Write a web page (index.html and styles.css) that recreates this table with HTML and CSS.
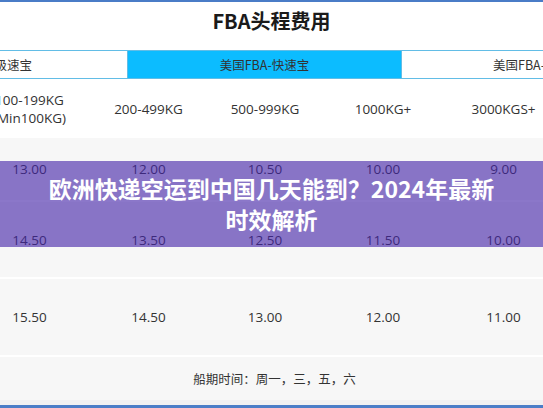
FILE: index.html
```html
<!DOCTYPE html>
<html lang="zh-CN">
<head>
<meta charset="utf-8">
<title>FBA头程费用</title>
<link rel="stylesheet" href="styles.css">
</head>
<body>
<div class="page">
  <div class="topline"></div>
  <h1 class="title">FBA头程费用</h1>
  <div class="tabs">
    <div class="tab tab-left">美国FBA-超级速宝</div>
    <div class="tab tab-active">美国FBA-快速宝</div>
    <div class="tab tab-right">美国FBA-特快宝</div>
  </div>
  <div class="table">
    <div class="row row-head">
      <div class="cell">100-199KG<br>(Min100KG)</div>
      <div class="cell">200-499KG</div>
      <div class="cell">500-999KG</div>
      <div class="cell">1000KG+</div>
      <div class="cell">3000KGS+</div>
    </div>
    <div class="row row-a">
      <div class="cell">13.00</div>
      <div class="cell">12.00</div>
      <div class="cell">10.50</div>
      <div class="cell">10.00</div>
      <div class="cell">9.00</div>
    </div>
    <div class="row row-b">
      <div class="cell">14.50</div>
      <div class="cell">13.50</div>
      <div class="cell">12.50</div>
      <div class="cell">11.50</div>
      <div class="cell">10.00</div>
    </div>
    <div class="row row-c">
      <div class="cell">15.50</div>
      <div class="cell">14.50</div>
      <div class="cell">13.00</div>
      <div class="cell">12.00</div>
      <div class="cell">11.00</div>
    </div>
  </div>
  <div class="footer">船期时间：周一，三，五，六</div>
  <div class="gap"></div>
  <div class="bottomline"></div>
  <div class="banner"><p class="banner-text">欧洲快递空运到中国几天能到？2024年最新时效解析</p></div>
</div>
</body>
</html>
```

FILE: styles.css
```css
html, body {
  margin: 0;
  padding: 0;
  background: #ffffff;
}
body {
  width: 543px;
  height: 408px;
  overflow: hidden;
  font-family: "Open Sans", "Noto Sans CJK SC", sans-serif;
  color: #333333;
}
.page {
  position: relative;
  width: 543px;
  height: 408px;
  display: flex;
  flex-direction: column;
  overflow: hidden;
}
.topline {
  height: 2px;
  background: #4a7cc7;
  flex: none;
}
.title {
  margin: 0;
  height: 48px;
  flex: none;
  display: flex;
  align-items: center;
  justify-content: center;
  padding-bottom: 12px;
  box-sizing: border-box;
  font-family: "Noto Sans CJK SC", sans-serif;
  font-size: 20px;
  font-weight: 700;
  color: #1a1a1a;
}
.tabs {
  display: flex;
  height: 29px;
  flex: none;
  border-top: 1px solid #62bde6;
  border-bottom: 1px solid #62bde6;
  box-sizing: border-box;
  font-family: "Noto Sans CJK SC", sans-serif;
  font-size: 12.5px;
  color: #333;
}
.tab {
  display: flex;
  align-items: center;
  white-space: nowrap;
  box-sizing: border-box;
}
.tab-left {
  width: 128px;
  flex: none;
  justify-content: flex-end;
  padding-right: 95px;
  overflow: hidden;
  border-right: 1px solid #62bde6;
}
.tab-active {
  width: 273px;
  flex: none;
  justify-content: center;
  background: #0cbcff;
}
.tab-right {
  flex: 1;
  padding-left: 91px;
  border-left: 1px solid #62bde6;
  overflow: hidden;
}
.table {
  margin-left: -31px;
  display: flex;
  flex-direction: column;
  gap: 2px;
  background: #ffffff;
  flex: none;
}
.row {
  display: grid;
  grid-template-columns: 121px 117px 116px 120px 121px;
  align-items: center;
  font-size: 13.5px;
  background: #f7f7f7;
}
.cell {
  text-align: center;
  white-space: nowrap;
  line-height: 18px;
}
.row-head {
  height: 59px;
  background: #ffffff;
  margin-bottom: -2px;
}
.row-a { height: 62px; }
.row-b { height: 75px; }
.row-c { height: 76px; }
.footer {
  margin-top: 2px;
  height: 43px;
  flex: none;
  display: flex;
  align-items: center;
  justify-content: center;
  padding-left: 6px;
  background: #f7f7f7;
  font-family: "Noto Sans CJK SC", sans-serif;
  font-size: 12.5px;
  color: #333;
}
.gap {
  flex: 1;
  background: #f0f0f2;
}
.bottomline {
  height: 3px;
  flex: none;
  background: #4a7cc7;
}
.banner {
  position: absolute;
  left: 0;
  right: 0;
  top: 161px;
  height: 86px;
  background: rgba(68, 36, 168, 0.62);
  display: flex;
  align-items: center;
  justify-content: center;
}
.banner-text {
  margin: 0;
  max-width: 460px;
  text-align: center;
  font-family: "Noto Sans CJK SC", sans-serif;
  font-size: 23px;
  font-weight: 700;
  line-height: 31px;
  color: #ffffff;
}
```
